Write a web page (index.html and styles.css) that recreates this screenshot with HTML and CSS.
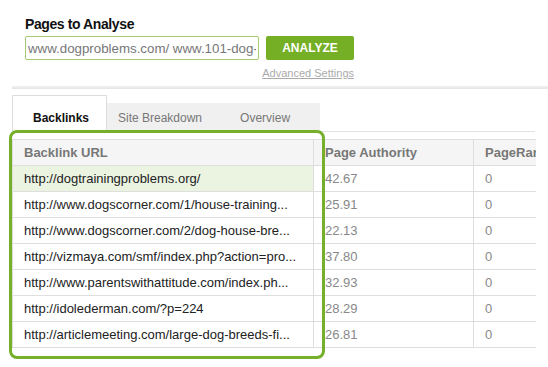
FILE: index.html
```html
<!DOCTYPE html>
<html lang="en">
<head>
    <meta charset="UTF-8">
    <title>Backlinks</title>
    <link rel="stylesheet" href="styles.css">
</head>
<body>
    <div class="analyse">
        <h2>Pages to Analyse</h2>
        <div class="analyse-row">
            <input type="text" class="url-input" value="www.dogproblems.com/ www.101-dog-training-tips.com/">
            <div class="analyse-actions">
                <button class="analyze-button">ANALYZE</button>
                <a href="#" class="advanced-link">Advanced Settings</a>
            </div>
        </div>
    </div>

    <div class="divider"></div>

    <div class="results">
        <div class="tabs">
            <div class="tab active">Backlinks</div>
            <div class="tab-group">
                <div class="tab">Site Breakdown</div>
                <div class="tab">Overview</div>
            </div>
        </div>

        <table class="backlinks">
            <thead>
                <tr>
                    <th class="col-url">Backlink URL</th>
                    <th class="col-pa">Page Authority</th>
                    <th class="col-pr">PageRank</th>
                </tr>
            </thead>
            <tbody>
                <tr class="selected">
                    <td class="col-url">http://dogtrainingproblems.org/</td>
                    <td>42.67</td>
                    <td>0</td>
                </tr>
                <tr>
                    <td class="col-url">http://www.dogscorner.com/1/house-training...</td>
                    <td>25.91</td>
                    <td>0</td>
                </tr>
                <tr>
                    <td class="col-url">http://www.dogscorner.com/2/dog-house-bre...</td>
                    <td>22.13</td>
                    <td>0</td>
                </tr>
                <tr>
                    <td class="col-url">http://vizmaya.com/smf/index.php?action=pro...</td>
                    <td>37.80</td>
                    <td>0</td>
                </tr>
                <tr>
                    <td class="col-url">http://www.parentswithattitude.com/index.ph...</td>
                    <td>32.93</td>
                    <td>0</td>
                </tr>
                <tr>
                    <td class="col-url">http://idolederman.com/?p=224</td>
                    <td>28.29</td>
                    <td>0</td>
                </tr>
                <tr>
                    <td class="col-url">http://articlemeeting.com/large-dog-breeds-fi...</td>
                    <td>26.81</td>
                    <td>0</td>
                </tr>
            </tbody>
        </table>

        <!-- highlight round the URL column -->
        <div class="url-highlight"></div>
    </div>
</body>
</html>
```

FILE: styles.css
```css
body {
    font-family: "Liberation Sans", Arial, sans-serif;
    margin: 0;
    padding: 0;
    background: white;
    color: #222;
    width: 548px;
    height: 367px;
    overflow: hidden;
}

.analyse {
    padding: 16px 0 0 25px;
}

.analyse h2 {
    margin: 0;
    font-size: 14px;
    letter-spacing: -0.4px;
    line-height: 16px;
    color: #111;
}

.analyse-row {
    display: flex;
    gap: 7px;
    margin-top: 4px;
}

.url-input {
    box-sizing: border-box;
    width: 234px;
    height: 24px;
    margin: 0;
    padding: 0 2px;
    border: 1px solid #a6cc6f;
    border-radius: 2px;
    font-family: "Liberation Sans", Arial, sans-serif;
    font-size: 13.3px;
    color: #777;
    outline: none;
}

.analyse-actions {
    display: flex;
    flex-direction: column;
    align-items: flex-end;
    width: 88px;
}

.analyze-button {
    width: 88px;
    height: 24px;
    background: #74af26;
    color: white;
    border: none;
    border-radius: 2px;
    font-family: "Liberation Sans", Arial, sans-serif;
    font-size: 12px;
    font-weight: bold;
    padding: 0;
}

.advanced-link {
    margin-top: 6px;
    font-size: 11px;
    line-height: 14px;
    color: #aaa;
    white-space: nowrap;
}

.divider {
    margin: 6px 0 0 12px;
    height: 3px;
    background: linear-gradient(#f0f0f0, #e6e6e6);
}

.results {
    position: relative;
    margin-left: 12px;
    padding-top: 6px;
}

.tabs {
    display: flex;
    align-items: flex-end;
    height: 36px;
    border-bottom: 1px solid #e2e2e2;
    width: 523px;
}

.tab {
    font-size: 12px;
    color: #777;
}

.tab.active {
    box-sizing: border-box;
    width: 95px;
    height: 37px;
    margin-bottom: -1px;
    padding-top: 15px;
    padding-left: 20px;
    background: white;
    border: 1px solid #ddd;
    border-bottom: none;
    font-weight: bold;
    color: #111;
}

.tab-group {
    display: flex;
    width: 213px;
    height: 28px;
    background: #f0f0f0;
    padding-left: 11px;
    gap: 38px;
    box-sizing: border-box;
    padding-top: 8px;
}

.backlinks {
    margin-top: 7px;
    width: 523px;
    border-collapse: collapse;
    table-layout: fixed;
    font-size: 13px;
}

.backlinks th,
.backlinks td {
    height: 26px;
    padding: 0 0 0 11px;
    border: 1px solid #dedede;
    text-align: left;
    white-space: nowrap;
    overflow: hidden;
    box-sizing: border-box;
}

.backlinks th {
    background: #f5f5f5;
    color: #777;
    font-size: 13px;
}

.backlinks td {
    color: #888;
}

.backlinks td.col-url {
    color: #222;
}

.backlinks tr td:last-child,
.backlinks tr th:last-child {
    border-right: none;
}

.col-url {
    width: 301px;
}

.col-pa {
    width: 160px;
}

.col-pr {
    width: 62px;
}

.backlinks tr.selected td.col-url {
    background: #ebf3e1;
}

.url-highlight {
    position: absolute;
    left: -3px;
    top: 41px;
    width: 310px;
    height: 223px;
    border: 3px solid #76b02b;
    border-radius: 8px;
}
```
